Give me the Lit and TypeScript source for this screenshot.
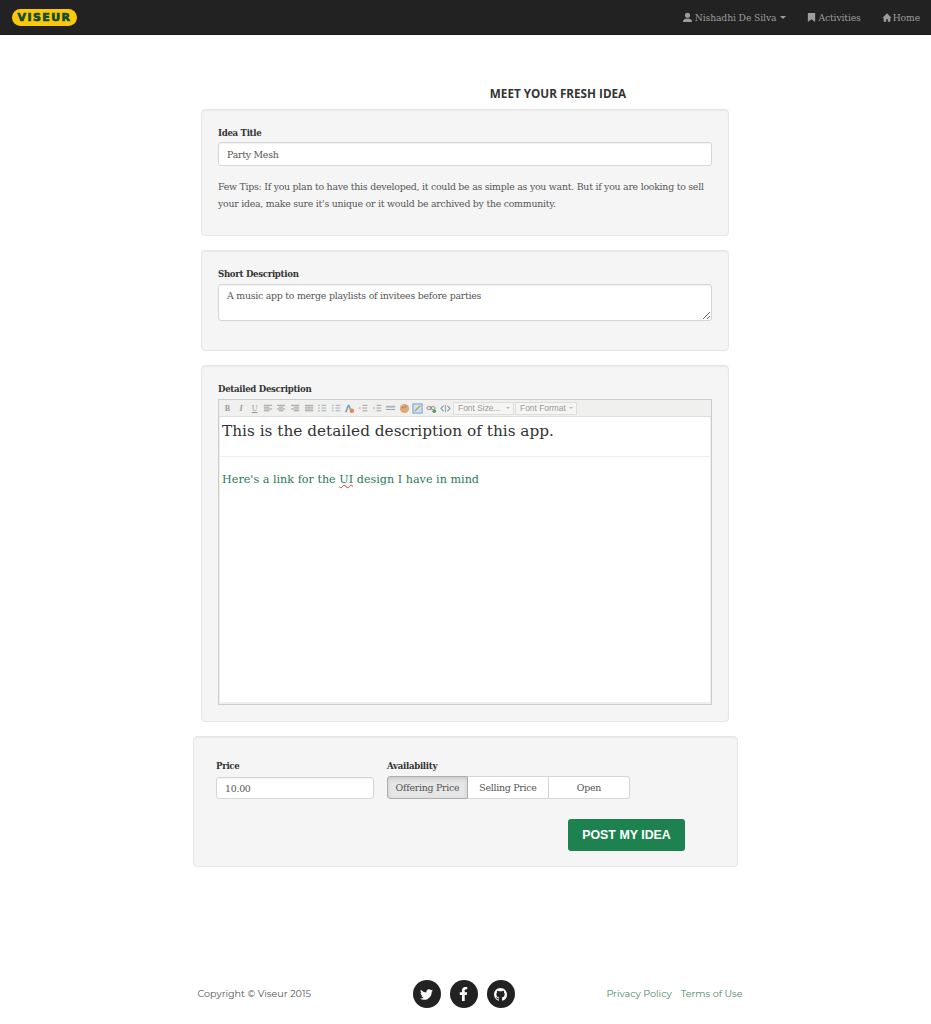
import { LitElement, html, css, svg } from "lit";
import { customElement } from "lit/decorators.js";

const lines = (rows: number[][], color = "#999") => html`<svg class="ti" viewBox="0 0 12 12">${rows.map(([a, b, y]) => svg`<rect x=${a} y=${y} width=${b - a} height="1" fill=${color}></rect>`)}</svg>`;
const letter = (t: string, cls = "") => html`<span class="tl ${cls}">${t}</span>`;

@customElement("app-root")
export class AppRoot extends LitElement {
  static styles = css`
    :host { display: block; font-family: "DejaVu Serif", serif; color: #555; background: #fff; height: 1024px; overflow: hidden; }
    .nav { height: 34px; background: #222; border-bottom: 1px solid #1a1a1a; display: flex; align-items: center; justify-content: space-between; padding: 0 11px 0 12px; }
    .logo { width: 65px; height: 17px; border-radius: 9px; background: #fbc90a; display: flex; align-items: center; justify-content: center; font: 900 11px "DejaVu Sans", sans-serif; color: #0f4a2c; letter-spacing: 1.4px; -webkit-text-stroke: .7px #0f4a2c; }
    .links { display: flex; gap: 21px; color: #9d9d9d; font-size: 9.2px; letter-spacing: -.1px; }
    .links span { display: flex; align-items: center; gap: 2px; }
    .links svg { width: 11px; height: 11px; fill: #9d9d9d; flex: none; }
    .links svg.bm { width: 9px; }
    .links span.hm { gap: 1px; }
    .links svg.hi { width: 10px; }
    .caret { width: 0; height: 0; border: 3px solid transparent; border-top-color: #9d9d9d; border-bottom: 0; margin-left: 2px; }
    main { display: flex; flex-direction: column; align-items: center; padding-top: 51px; }
    h1 { margin: 0 0 9px 185px; font: 700 11.7px/14px "Open Sans", sans-serif; color: #333; width: 340px; text-align: center; box-sizing: border-box; }
    .card { width: 528px; box-sizing: border-box; background: #f5f5f5; border: 1px solid #e6e6e6; border-radius: 4px; padding: 17px 16px 0; margin: 0 1px 14px 0; box-shadow: inset 0 1px 1px rgba(0,0,0,.05); }
    .c1 { height: 127px; } .c2 { height: 101px; } .c3 { height: 357px; }
    .c4 { width: 545px; height: 131px; padding: 23px 22px 0; margin: 0; }
    label { display: block; font-size: 8.6px; font-weight: 700; letter-spacing: -.3px; color: #333; line-height: 12px; margin-bottom: 4px; }
    .c1 label { margin-bottom: 3px; }
    input, textarea { display: block; width: 100%; box-sizing: border-box; font: 9.4px "DejaVu Serif", serif; letter-spacing: -.25px; color: #555; border: 1px solid #d6d6d6; border-radius: 3px; background: #fff; padding: 0 8px; box-shadow: inset 0 1px 1px rgba(0,0,0,.05); outline: none; }
    input { height: 24px; }
    textarea { height: 37px; padding-top: 5px; margin: 0; }
    p { margin: 12px 0 0; font-size: 9.4px; letter-spacing: -.25px; line-height: 17px; color: #555; }
    .editor { height: 306px; border: 1px solid #ccc; display: flex; flex-direction: column; background: #fff; box-sizing: border-box; }
    .tb { height: 17px; background: #f0f0ee; border-bottom: 1px solid #ddd; display: flex; align-items: center; padding-left: 3px; gap: 2.6px; flex: none; box-sizing: border-box; }
    .ti { width: 11px; height: 11px; flex: none; }
    .tl { width: 11px; text-align: center; font: 700 8px "Liberation Serif", serif; color: #999; flex: none; }
    .tl.i { font-style: italic; } .tl.u { text-decoration: underline; font-weight: 400; }
    .sel { height: 13px; box-sizing: border-box; border: 1px solid #ddd; background: #f5f5f3; color: #999; font: 8.4px/11px "Liberation Sans", sans-serif; padding: 0 3px 0 4px; display: flex; justify-content: space-between; align-items: center; margin-left: -1.6px; }
    .sel::after { content: ""; border: 2.500px solid transparent; border-top-color: #bbb; border-bottom: 0; }
    .s1 { width: 61px; margin-left: 0; } .s2 { width: 62px; }
    .body { flex: 1; padding: 1px 2px 0; border: 1px solid #eee; border-top: 0; border-bottom-width: 2px; }
    .h { font-size: 15.3px; line-height: 26px; color: #333; height: 38px; border-bottom: 1px solid #eee; margin: 0 -2px; padding: 0 2px; }
    .g { font-size: 11.2px; line-height: 14px; color: #2b7a55; margin-top: 16px; }
    .g u { text-decoration: underline wavy #e33; text-decoration-thickness: 1px; text-underline-offset: 1px; }
    .row { display: flex; gap: 13px; }
    .row > div:first-child { width: 158px; }
    .c4 label { margin-bottom: 5px; }
    .c4 input { height: 22px; }
    .grp { display: flex; height: 23px; margin-top: -1px; }
    .grp span { width: 81px; box-sizing: border-box; border: 1px solid #d6d6d6; border-left-width: 0; background: #fff; display: flex; align-items: center; justify-content: center; font-size: 9.4px; letter-spacing: -.25px; color: #555; }
    .grp span:first-child { border-left-width: 1px; border-radius: 3px 0 0 3px; background: #e6e6e6; border-color: #adadad; box-shadow: inset 0 2px 4px rgba(0,0,0,.125); }
    .grp span:last-child { border-radius: 0 3px 3px 0; }
    .actions { display: flex; justify-content: flex-end; padding: 20px 30px 0 0; }
    .post { width: 117px; height: 32px; background: #1d8250; border-radius: 3px; color: #fff; font: 700 12.4px/32px "Liberation Sans", sans-serif; text-align: center; }
    footer { display: grid; grid-template-columns: 215px 100px 1fr; width: 545px; margin: 113px 0 0 9px; align-items: center; font: 9.6px "Montserrat", "Open Sans", sans-serif; color: #555; height: 28px; }
    footer > div:first-child, .legal { padding-bottom: 2px; }
    .soc { display: flex; gap: 9px; }
    .soc span { width: 28px; height: 28px; flex: none; border-radius: 50%; background: #222; display: flex; align-items: center; justify-content: center; }
    .soc svg { width: 13px; height: 13px; fill: #fff; }
    .soc svg.f { height: 14px; }
    .legal { display: flex; justify-content: flex-end; gap: 9px; color: #4a8566; }
  `;

  render() {
    const toolbar = [
      letter("B"), letter("I", "i"), letter("U", "u"),
      lines([[1,10,2],[1,7,4],[1,10,6],[1,7,8]]), lines([[1,10,2],[3,8,4],[1,10,6],[3,8,8]]), lines([[1,10,2],[4,10,4],[1,10,6],[4,10,8]]), lines([[1,10,2],[1,10,4],[1,10,6],[1,10,8]]),
      lines([[5,10,2],[5,10,5],[5,10,8],[1,3,2],[1,3,5],[1,3,8]], "#9aa7b5"), lines([[5,10,2],[5,10,5],[5,10,8],[1,3,2],[1,3,5],[1,3,8]], "#9aa7b5"),
      html`<svg class="ti" viewBox="0 0 12 12"><path d="M1 10 4 2h2l3 8H7.500L5 4 3 10z" fill="#7a9cc6"/><circle cx="8.500" cy="8.500" r="2.500" fill="#e08a4a"/></svg>`,
      lines([[5,10,2],[5,10,5],[5,10,8],[1,3,5]]), lines([[5,10,2],[5,10,5],[5,10,8],[1,3,5]]),
      html`<svg class="ti" viewBox="0 0 12 12"><rect x="1" y="3" width="10" height="2" fill="#9db4cc"/><rect x="1" y="6.500" width="10" height="1" fill="#999"/></svg>`,
      html`<svg class="ti" viewBox="0 0 12 12"><circle cx="6" cy="6" r="5" fill="#e0a878"/><circle cx="4" cy="5" r="1" fill="#d55"/><circle cx="7" cy="4" r="1" fill="#5a5"/></svg>`,
      html`<svg class="ti" viewBox="0 0 12 12"><rect x="1" y="1" width="10" height="10" fill="#cfe2f3" stroke="#6a9bc9"/><path d="M3 9 9 3" stroke="#c9a34a" stroke-width="1.500"/></svg>`,
      html`<svg class="ti" viewBox="0 0 12 12"><rect x="1" y="4" width="5" height="3" rx="1.500" fill="none" stroke="#888"/><rect x="5" y="4" width="5" height="3" rx="1.500" fill="none" stroke="#888"/><circle cx="9" cy="9" r="2" fill="#5a9c5a"/></svg>`,
      html`<svg class="ti" viewBox="0 0 12 12"><path d="M4 3 1 6l3 3M8 3l3 3-3 3" fill="none" stroke="#8aa0b8" stroke-width="1.200"/><path d="M6 2v8" stroke="#999"/></svg>`,
    ];
    return html`
      <div class="nav">
        <div class="logo">VISEUR</div>
        <div class="links">
          <span><svg viewBox="0 0 12 12"><circle cx="6" cy="3.500" r="2.800"/><path d="M1 11c0-3 2-4 5-4s5 1 5 4z"/></svg>Nishadhi De Silva<i class="caret"></i></span>
          <span><svg class="bm" viewBox="0 0 9 12"><path d="M.500 1h8v10L4.500 8l-4 3z"/></svg>Activities</span>
          <span class="hm"><svg class="hi" viewBox="0 0 12 12"><path d="M6 1 .500 6.500H2V11h3V8h2v3h3V6.500h1.500z"/></svg>Home</span>
        </div>
      </div>
      <main>
        <h1>MEET YOUR FRESH IDEA</h1>
        <section class="card c1">
          <label>Idea Title</label>
          <input .value=${"Party Mesh"} />
          <p>Few Tips: If you plan to have this developed, it could be as simple as you want. But if you are looking to sell your idea, make sure it's unique or it would be archived by the community.</p>
        </section>
        <section class="card c2">
          <label>Short Description</label>
          <textarea .value=${"A music app to merge playlists of invitees before parties"}></textarea>
        </section>
        <section class="card c3">
          <label>Detailed Description</label>
          <div class="editor">
            <div class="tb">${toolbar}<span class="sel s1">Font Size...</span><span class="sel s2">Font Format</span></div>
            <div class="body">
              <div class="h">This is the detailed description of this app.</div>
              <div class="g">Here's a link for the <u>UI</u> design I have in mind</div>
            </div>
          </div>
        </section>
        <section class="card c4">
          <div class="row">
            <div><label>Price</label><input .value=${"10.00"} /></div>
            <div><label>Availability</label><div class="grp"><span>Offering Price</span><span>Selling Price</span><span>Open</span></div></div>
          </div>
          <div class="actions"><div class="post">POST MY IDEA</div></div>
        </section>
        <footer>
          <div>Copyright © Viseur 2015</div>
          <div class="soc">
            <span><svg viewBox="0 0 512 512"><path d="M459.37 151.716c.325 4.548.325 9.097.325 13.645 0 138.72-105.583 298.558-298.558 298.558-59.452 0-114.68-17.219-161.137-47.106 8.447.974 16.568 1.299 25.34 1.299 49.055 0 94.213-16.568 130.274-44.832-46.132-.975-84.792-31.188-98.112-72.772 6.498.974 12.995 1.624 19.818 1.624 9.421 0 18.843-1.3 27.614-3.573-48.081-9.747-84.143-51.98-84.143-102.985v-1.299c13.969 7.797 30.214 12.67 47.431 13.319-28.264-18.843-46.781-51.005-46.781-87.391 0-19.492 5.197-37.36 14.294-52.954 51.655 63.675 129.3 105.258 216.365 109.807-1.624-7.797-2.599-15.918-2.599-24.04 0-57.828 46.782-104.934 104.934-104.934 30.213 0 57.502 12.67 76.67 33.137 23.715-4.548 46.456-13.32 66.599-25.34-7.798 24.366-24.366 44.833-46.132 57.827 21.117-2.273 41.584-8.122 60.426-16.243-14.292 20.791-32.161 39.308-52.628 54.253z"/></svg></span>
            <span><svg class="f" viewBox="0 0 320 512"><path d="M279.14 288l14.22-92.66h-88.91v-60.13c0-25.35 12.42-50.06 52.24-50.06h40.42V6.26S260.43 0 225.36 0c-73.22 0-121.08 44.38-121.08 124.72v70.62H22.89V288h81.39v224h100.17V288z"/></svg></span>
            <span><svg viewBox="0 0 16 16"><path d="M8 0C3.58 0 0 3.58 0 8c0 3.54 2.29 6.53 5.47 7.59.4.07.55-.17.55-.38 0-.19-.01-.82-.01-1.49-2.01.37-2.53-.49-2.69-.94-.09-.23-.48-.94-.82-1.13-.28-.15-.68-.52-.01-.53.63-.01 1.08.58 1.23.82.72 1.21 1.87.87 2.33.66.07-.52.28-.87.51-1.07-1.78-.2-3.64-.89-3.64-3.95 0-.87.31-1.59.82-2.15-.08-.2-.36-1.02.08-2.12 0 0 .67-.21 2.2.82.64-.18 1.32-.27 2-.27.68 0 1.36.09 2 .27 1.53-1.04 2.2-.82 2.2-.82.44 1.1.16 1.92.08 2.12.51.56.82 1.27.82 2.15 0 3.07-1.87 3.75-3.65 3.95.29.25.54.73.54 1.48 0 1.07-.01 1.93-.01 2.2 0 .21.15.46.55.38A8.013 8.013 0 0016 8c0-4.42-3.58-8-8-8z"/></svg></span>
          </div>
          <div class="legal"><span>Privacy Policy</span><span>Terms of Use</span></div>
        </footer>
      </main>
    `;
  }
}
